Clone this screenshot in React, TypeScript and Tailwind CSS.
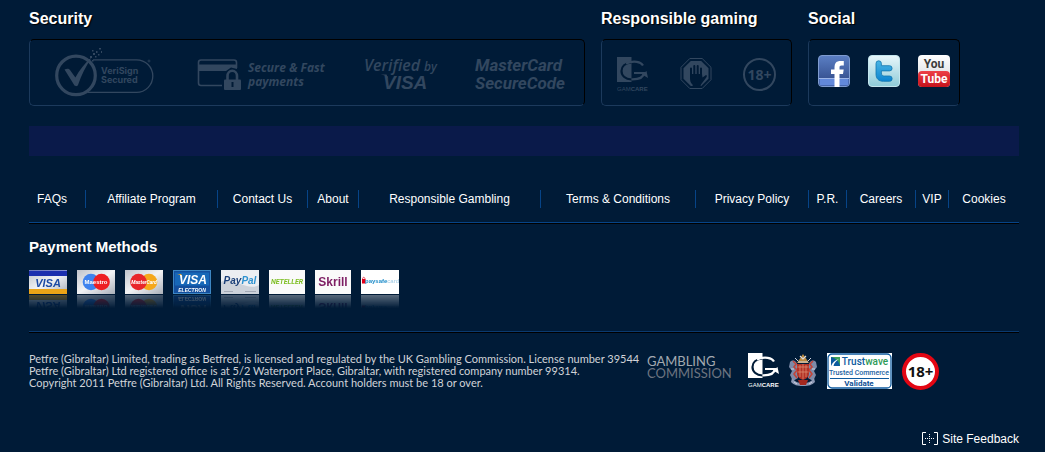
import type { ReactNode } from 'react';

const LINKS = ['FAQs', 'Affiliate Program', 'Contact Us', 'About', 'Responsible Gambling', 'Terms & Conditions', 'Privacy Policy', 'P.R.', 'Careers', 'VIP', 'Cookies'];
const SANS = '"Open Sans", "Noto Sans", sans-serif';
const ARIAL = '"Liberation Sans", Arial, sans-serif';
const ROBOTO = 'Roboto, "Liberation Sans", sans-serif';
const MUTED = '#32475f';

function Panel({ title, className, children }: { title: string; className: string; children: ReactNode }) {
  return (
    <section>
      <h2 className="text-base font-bold leading-5 text-white [text-shadow:1px_1px_1px_#000]">{title}</h2>
      <div className={`mt-2.5 flex h-[67px] items-center justify-between rounded-[5px] border border-t-black border-r-black border-b-[#1c3a5c] border-l-[#1c3a5c] ${className}`}>
        {children}
      </div>
    </section>
  );
}

function Mark({ label, children }: { label: string; children: ReactNode }) {
  return <a href="#" aria-label={label} className="block shrink-0">{children}</a>;
}

function VeriSign() {
  return (
    <svg width="106" height="51" fill="none" stroke={MUTED}>
      <path d="M38 12.8h43.5a16.3 16.3 0 0 1 0 32.6H33" strokeWidth="1.3" />
      <circle cx="21" cy="28.4" r="19.3" strokeWidth="3.2" fill="#001a35" />
      <path d="M9.500 22.500c2.500-1.200 4.500-1 5.500.6l5.400 7.500C24.500 23 29.500 16.500 36.500 10.500 30.500 20 26.500 28 23 38c-.8 1.600-3 1.600-3.800 0z" fill={MUTED} stroke="none" />
      <path d="M35 9h2v2h-2zM38 6h2v2h-2zM41 4h1.500v2H41zM44 1h2v1.500h-2zM40 9h1.500v1.500H40zM43 7h1.500v1.500H43zM37 3h1.500v1.500H37zM33 12h2v2h-2zM46 4h1v2h-1zM37 13h1.500v1.500H37z" fill={MUTED} stroke="none" />
      <circle cx="94" cy="14" r="1" strokeWidth=".7" />
      <g fill={MUTED} stroke="none" fontFamily="Inter, sans-serif" fontSize="9" fontWeight="700">
        <text x="46" y="27">VeriSign</text>
        <text x="46" y="36">Secured</text>
      </g>
    </svg>
  );
}

function SecureFast() {
  return (
    <svg width="131" height="51" fill={MUTED}>
      <path d="M25 38.500H4a2.500 2.500 0 0 1-2.500-2.500V15.500A2.500 2.500 0 0 1 4 13h33a2.500 2.500 0 0 1 2.500 2.500V21" fill="none" stroke={MUTED} strokeWidth="1.600" />
      <path d="M1 17.500h39V22l-6-1.500-5 3.500H1z" />
      <path d="M30.500 34v-5a4.500 5 0 0 1 9.500 0v5" fill="none" stroke={MUTED} strokeWidth="2.600" />
      <rect x="27" y="32.500" width="17" height="10.500" rx="1" />
      <path d="M34.500 35h2v5h-2z" fill="#001a35" />
      <g fontFamily={SANS} fontSize="12" fontWeight="700" fontStyle="italic">
        <text x="51" y="25">Secure &amp; Fast</text>
        <text x="51" y="39">payments</text>
      </g>
    </svg>
  );
}

function VerifiedByVisa() {
  return (
    <svg width="76" height="51" fill={MUTED} fontFamily={SANS} fontStyle="italic">
      <text x="1" y="24" fontSize="16" fontWeight="600">Verified</text>
      <text x="61" y="24" fontSize="12" fontWeight="600">by</text>
      <path d="M17.500 27.500h6l2 5c-2-3-4-4.500-8-5z" />
      <text x="20" y="42" fontSize="19" fontWeight="700" fontFamily={ARIAL}>VISA</text>
    </svg>
  );
}

function SecureCode() {
  return (
    <svg width="90" height="51" fill={MUTED} fontFamily={ROBOTO} fontSize="17" fontWeight="700" fontStyle="italic">
      <text x="0" y="24">MasterCard</text>
      <text x="0" y="42">SecureCode</text>
    </svg>
  );
}

function GamCare({ ink, ground }: { ink: string; ground: string }) {
  return (
    <svg width="31" height="35" fill="none">
      <path d="M0 0h14.500v25H0z" fill={ink} />
      <path d="M14.500 5.500C8 6 4.500 9.500 4.500 14c0 4.800 4 8 10 8.500" stroke={ground} strokeWidth="2.200" />
      <path d="M9 6.500C17 3 24 5 26 8.500M14.500 22.300c7 .2 12-2 12.500-6.300h-10" stroke={ink} strokeWidth="2.200" />
      <path d="M25 17.500l4.500-3.500L31 21l-2.500-1.500z" fill={ink} />
      <text x="0" y="34" fill={ink} fontFamily={ARIAL} fontSize="6">GAM<tspan fontWeight="700">CARE</tspan></text>
    </svg>
  );
}

function StopHand() {
  return (
    <svg width="32" height="35" fill="none">
      <path d="M9.800 1.500h12.400L31 10.300v12.400l-8.800 8.800H9.800L1 22.700V10.300z" stroke={MUTED} strokeWidth="1" />
      <path d="M10.800 4h10.400l7.300 7.300v10.400L21.200 29H10.800l-7.300-7.300V11.300z" fill={MUTED} />
      <path d="M11 20V11.500M14.300 18V9M17.700 18V9M21 19V11.500" stroke="#001a35" strokeWidth="2" strokeLinecap="round" />
      <path d="M10 17h12l.5 3.500 3.500-2.500c1.500.3.800 1.700.3 2.500L21 27.500l-1 3.500h-7l-.5-3.500c-2-1.500-2.500-4-2.500-6.500z" fill="#001a35" />
    </svg>
  );
}

function Over18({ size, ring, width, fill, ink }: { size: number; ring: string; width: number; fill: string; ink: string }) {
  const c = size / 2;
  return (
    <svg width={size} height={size}>
      <circle cx={c} cy={c} r={c - width / 2} fill={fill} stroke={ring} strokeWidth={width} />
      <text x={c} y={c + 5} textAnchor="middle" fontFamily={SANS} fontSize={size > 35 ? 15 : 14} fontWeight="700" fill={ink}>18+</text>
    </svg>
  );
}

function Facebook() {
  return (
    <svg width="32" height="32">
      <defs><linearGradient id="fb" x2="0" y2="1"><stop stopColor="#5b7fc4" /><stop offset="1" stopColor="#2c4583" /></linearGradient></defs>
      <rect x=".5" y=".5" width="31" height="31" rx="3.500" fill="url(#fb)" stroke="#7f9cd0" />
      <path d="M1.500 24h29v4.500a2 2 0 0 1-2 2h-25a2 2 0 0 1-2-2z" fill="#6289da" />
      <path d="M1 23.500h30" stroke="#9db5e6" />
      <path d="M16.500 32V19H13v-4.500h3.500v-2C16.500 8 18.500 6 22.500 6h3.300v4.500h-2.300c-1.600 0-2 .7-2 2v2h4.200L25 19h-3.500v13z" fill="#fff" />
    </svg>
  );
}

function Twitter() {
  return (
    <svg width="32" height="32">
      <defs>
        <linearGradient id="tw" x2="0" y2="1"><stop stopColor="#e8f7fb" /><stop offset="1" stopColor="#8ecbd8" /></linearGradient>
        <linearGradient id="twt" x2="0" y2="1"><stop stopColor="#4ab5e4" /><stop offset="1" stopColor="#0b84d0" /></linearGradient>
      </defs>
      <rect x=".5" y=".5" width="31" height="31" rx="3.500" fill="url(#tw)" stroke="#c4e6ee" />
      <path d="M8 8.500a2.700 2.700 0 0 1 5.400 0v2.200h8.100a2.600 2.600 0 0 1 0 5.200h-8.100v2c0 2.200 1 3.100 3 3.100h5.100a2.600 2.600 0 0 1 0 5.300h-6C10.500 26.300 8 23.500 8 19z" fill="url(#twt)" stroke="#1176ae" strokeWidth=".8" />
    </svg>
  );
}

function YouTube() {
  return (
    <svg width="32" height="32" fontFamily={ROBOTO} fontWeight="700" textAnchor="middle">
      <defs>
        <linearGradient id="yt" x2="0" y2="1"><stop stopColor="#fff" /><stop offset="1" stopColor="#cfd3d8" /></linearGradient>
        <linearGradient id="ytr" x2="0" y2="1"><stop stopColor="#ed4047" /><stop offset="1" stopColor="#c4121b" /></linearGradient>
      </defs>
      <rect width="32" height="32" rx="4" fill="url(#yt)" />
      <path d="M0 20c0-2.500 1.500-4 4-4h24c2.500 0 4 1.500 4 4v8a4 4 0 0 1-4 4H4a4 4 0 0 1-4-4z" fill="url(#ytr)" />
      <text x="16" y="13" fontSize="12" fill="#3b3b3b">You</text>
      <text x="16" y="28" fontSize="12" fill="#fff">Tube</text>
    </svg>
  );
}

function Card({ label, width = 38, children }: { label: string; width?: number; children: ReactNode }) {
  return (
    <li className="[-webkit-box-reflect:below_1px_linear-gradient(transparent_45%,rgba(255,255,255,0.35))]">
      <svg role="img" aria-label={label} width={width} height="24" textAnchor="middle" className="block">{children}</svg>
    </li>
  );
}

function PaymentCards() {
  return (
    <ul className="mt-[13px] flex gap-2.5">
      <Card label="Visa">
        <defs><linearGradient id="silver" x2="1" y2="1"><stop stopColor="#bfc3ca" /><stop offset=".5" stopColor="#f2f3f5" /><stop offset="1" stopColor="#a9afb8" /></linearGradient></defs>
        <rect width="38" height="24" fill="url(#silver)" />
        <path d="M0 .5h38V6H0z" fill="#1c2fae" />
        <path d="M0 19h38v5H0z" fill="#eba417" />
        <text x="19" y="17" fontFamily={ARIAL} fontSize="11" fontWeight="700" fontStyle="italic" fill="#1b4aa5">VISA</text>
      </Card>
      <Card label="Maestro">
        <rect width="38" height="24" fill="url(#silver)" />
        <circle cx="14" cy="12" r="8.300" fill="#3f83ee" />
        <circle cx="24.500" cy="12" r="8.300" fill="#ee1f22" />
        <text x="19" y="14" fontFamily={ARIAL} fontSize="6" fontWeight="700" fill="#fff">Maestro</text>
      </Card>
      <Card label="MasterCard">
        <rect width="38" height="24" fill="url(#silver)" />
        <circle cx="24" cy="12" r="8.300" fill="#f5a81c" />
        <circle cx="13.500" cy="12" r="8.300" fill="#e8262a" />
        <text x="19" y="14" fontFamily={ROBOTO} fontSize="5" fontWeight="700" fontStyle="italic" fill="#fff">MasterCard</text>
      </Card>
      <Card label="Visa Electron">
        <rect x=".5" y=".5" width="37" height="23" fill="#134f9e" stroke="#3d87c4" />
        <path d="M2 2.500h34v13H2z" fill="#1768b8" />
        <path d="M4 4h4l2.500 4C9 6 7 4.500 4 4z" fill="#f2a71b" />
        <text x="20" y="14" fontFamily={ARIAL} fontSize="12" fontWeight="700" fontStyle="italic" fill="#fff">VISA</text>
        <text x="19" y="22" fontFamily={ARIAL} fontSize="5" fontWeight="700" fontStyle="italic" fill="#fff">ELECTRON</text>
      </Card>
      <Card label="PayPal">
        <rect width="38" height="24" fill="#eceef2" />
        <path d="M0 12C12 6 26 22 38 15v9H0z" fill="#cdd2da" />
        <path d="M3 21.500h9M24 21.500h11" stroke="#a3a9b5" />
        <text x="19" y="14" fontFamily={ARIAL} fontSize="10" fontWeight="700" fontStyle="italic" fill="#1b3f78">Pay<tspan fill="#2f92d0">Pal</tspan></text>
      </Card>
      <Card label="Neteller" width={36}>
        <rect width="36" height="24" fill="#fafafa" />
        <text x="18" y="14" fontFamily={ROBOTO} fontSize="7" fontWeight="700" fontStyle="italic" fill="#7fbf26">NETELLER</text>
      </Card>
      <Card label="Skrill" width={36}>
        <rect width="36" height="24" fill="#fafafa" />
        <text x="18" y="16" fontFamily={ARIAL} fontSize="12" fontWeight="700" fill="#7d1d63">Skrill</text>
      </Card>
      <Card label="paysafecard">
        <rect width="38" height="24" fill="#fff" />
        <rect x="1" y="9" width="3.500" height="4.500" fill="#e2001a" />
        <path d="M1.500 9.500c0-3 2.500-3 2.500 0" fill="none" stroke="#e2001a" strokeWidth=".7" />
        <text x="21" y="13" fontFamily={ARIAL} fontSize="6" fontWeight="700" fill="#1d8cc9">paysafe<tspan fontWeight="400" fill="#9cc9e4">card</tspan></text>
      </Card>
    </ul>
  );
}

function Crest() {
  return (
    <svg width="28" height="34">
      <path d="M1 9c3-3 6-1 7 2l1 14-5 3-3-6 2-4-3-4zM27 9c-3-3-6-1-7 2l-1 14 5 3 3-6-2-4 3-4z" fill="#7d8aa8" />
      <path d="M4 8l3 3-2 3 3 3-3 4 3 4M24 8l-3 3 2 3-3 3 3 4-3 4" stroke="#c2453a" strokeWidth="1.600" fill="none" />
      <path d="M10 7l4-6 4 6 2 3H8z" fill="#b8893f" />
      <path d="M11 3l3 3 3-3M9 9h10" stroke="#d8dbe4" strokeWidth="1.200" fill="none" />
      <path d="M8 11h12v9c0 4-3 6-6 7-3-1-6-3-6-7z" fill="#b33226" />
      <path d="M8.500 14h11M8.500 19h11M14 11v15M11 12v12M17 12v12" stroke="#dd8a70" strokeWidth=".8" />
      <path d="M3 25c3 4 6 5 11 5s8-1 11-5l1 4c-3 3-6 4-12 4S5 32 2 29z" fill="#8d99b5" />
      <path d="M9 27h10l-2 5h-6z" fill="#a5281f" />
      <path d="M5 29l3 2M20 31l3-2M2 16h3M23 16h3M6 5l3 3M22 5l-3 3" stroke="#cdd3e2" />
    </svg>
  );
}

function Trustwave() {
  return (
    <svg width="65" height="36" textAnchor="middle">
      <rect width="65" height="36" fill="#fff" />
      <rect x="1" y="1" width="63" height="34" rx="4" fill="#fff" stroke="#0d5a9e" strokeWidth="1.300" />
      <path d="M4 4h9v9H4z" fill="#0d5a9e" />
      <path d="M4 4h9v9C12 8 9 5.500 4 4z" fill="#3aa05a" />
      <path d="M4 13c2-4 4-6 8-7-3 2-5 4-5.500 7z" fill="#fff" />
      <text x="38" y="12" fontFamily={ROBOTO} fontSize="10" fontWeight="500" fill="#0d5a9e">Trust<tspan fill="#2e9a57">wave</tspan></text>
      <text x="32" y="22" fontFamily={ROBOTO} fontSize="7" fontWeight="500" fill="#1c5f9f">Trusted Commerce</text>
      <path d="M3 25.500h59" stroke="#0d5a9e" />
      <text x="32" y="33" fontFamily={ROBOTO} fontSize="8" fontWeight="700" fill="#0d4f93">Validate</text>
    </svg>
  );
}

export default function App() {
  return (
    <footer className="min-h-screen bg-[#001b37] pt-[9px] pr-[26px] pb-1 pl-[29px] font-['Liberation_Sans',Arial,sans-serif] text-white">
      <div className="grid max-w-[931px] grid-cols-[556fr_191fr_152fr] gap-4">
        <Panel title="Security" className="pr-[19px] pl-[25px]">
          <Mark label="VeriSign Secured"><VeriSign /></Mark>
          <Mark label="Secure and fast payments"><SecureFast /></Mark>
          <Mark label="Verified by Visa"><VerifiedByVisa /></Mark>
          <Mark label="MasterCard SecureCode"><SecureCode /></Mark>
        </Panel>
        <Panel title="Responsible gaming" className="px-[15px] pt-1">
          <Mark label="GamCare"><GamCare ink={MUTED} ground="#001a35" /></Mark>
          <Mark label="Gambling controls"><StopHand /></Mark>
          <Mark label="Over 18 only"><Over18 size={33} ring={MUTED} width={2} fill="none" ink={MUTED} /></Mark>
        </Panel>
        <Panel title="Social" className="px-[9px] pb-[3px]">
          <Mark label="Facebook"><Facebook /></Mark>
          <Mark label="Twitter"><Twitter /></Mark>
          <Mark label="YouTube"><YouTube /></Mark>
        </Panel>
      </div>

      <div className="mt-5 h-[30px] bg-[#0a1a4a]" />

      <nav className="mt-[34px] border-b border-[#064488] pb-3.5 shadow-[0_1px_0_#000]">
        <ul className="grid grid-cols-[57fr_132fr_90fr_51fr_182fr_155fr_113fr_38fr_69fr_33fr_70fr] text-center text-xs leading-[18px]">
          {LINKS.map((l) => (
            <li key={l} className="border-r border-[#064488] first:pl-2 first:text-left last:border-0"><a href="#" className="whitespace-nowrap hover:underline">{l}</a></li>
          ))}
        </ul>
      </nav>

      <section className="mt-3.5 border-b border-[#0a3a70] pb-[37px] shadow-[0_1px_0_#000]">
        <h2 className="text-[15px] font-bold leading-5">Payment Methods</h2>
        <PaymentCards />
      </section>

      <div className="mt-[21px] flex items-start">
        <p className="w-[618px] shrink-0 whitespace-nowrap font-['Lato','Liberation_Sans',sans-serif] text-[11px] leading-3 text-[#d0d3d8]">
          Petfre (Gibraltar) Limited, trading as Betfred, is licensed and regulated by the UK Gambling Commission. License number 39544<br />
          Petfre (Gibraltar) Ltd registered office is at 5/2 Waterport Place, Gibraltar, with registered company number 99314.<br />
          Copyright 2011 Petfre (Gibraltar) Ltd. All Rights Reserved. Account holders must be 18 or over.
        </p>
        <div className="flex gap-2.5">
          <a href="#" className="mt-0.5 block w-[91px] font-['Lato',sans-serif] text-[13px] leading-3 text-[#a3a9b1]">GAMBLING<br /><span className="text-[#6d7480]">COMMISSION</span></a>
          <Mark label="GamCare"><GamCare ink="#fff" ground="#001b37" /></Mark>
          <Mark label="Government of Gibraltar"><Crest /></Mark>
          <Mark label="Trustwave Trusted Commerce"><Trustwave /></Mark>
          <Mark label="Over 18 only"><Over18 size={37} ring="#e30613" width={4} fill="#fff" ink="#111" /></Mark>
        </div>
      </div>

      <div className="mt-10 flex justify-end">
        <button type="button" className="flex items-center gap-1 text-xs leading-[18px]">
          <svg width="16" height="14" fill="none" stroke="#fff">
            <path d="M4 .5H.5v12H4M12 .5h3.500v12H12" />
            <path d="M3 6.500h10M7.500 2v9" strokeDasharray="1 1" />
          </svg>
          Site Feedback
        </button>
      </div>
    </footer>
  );
}
